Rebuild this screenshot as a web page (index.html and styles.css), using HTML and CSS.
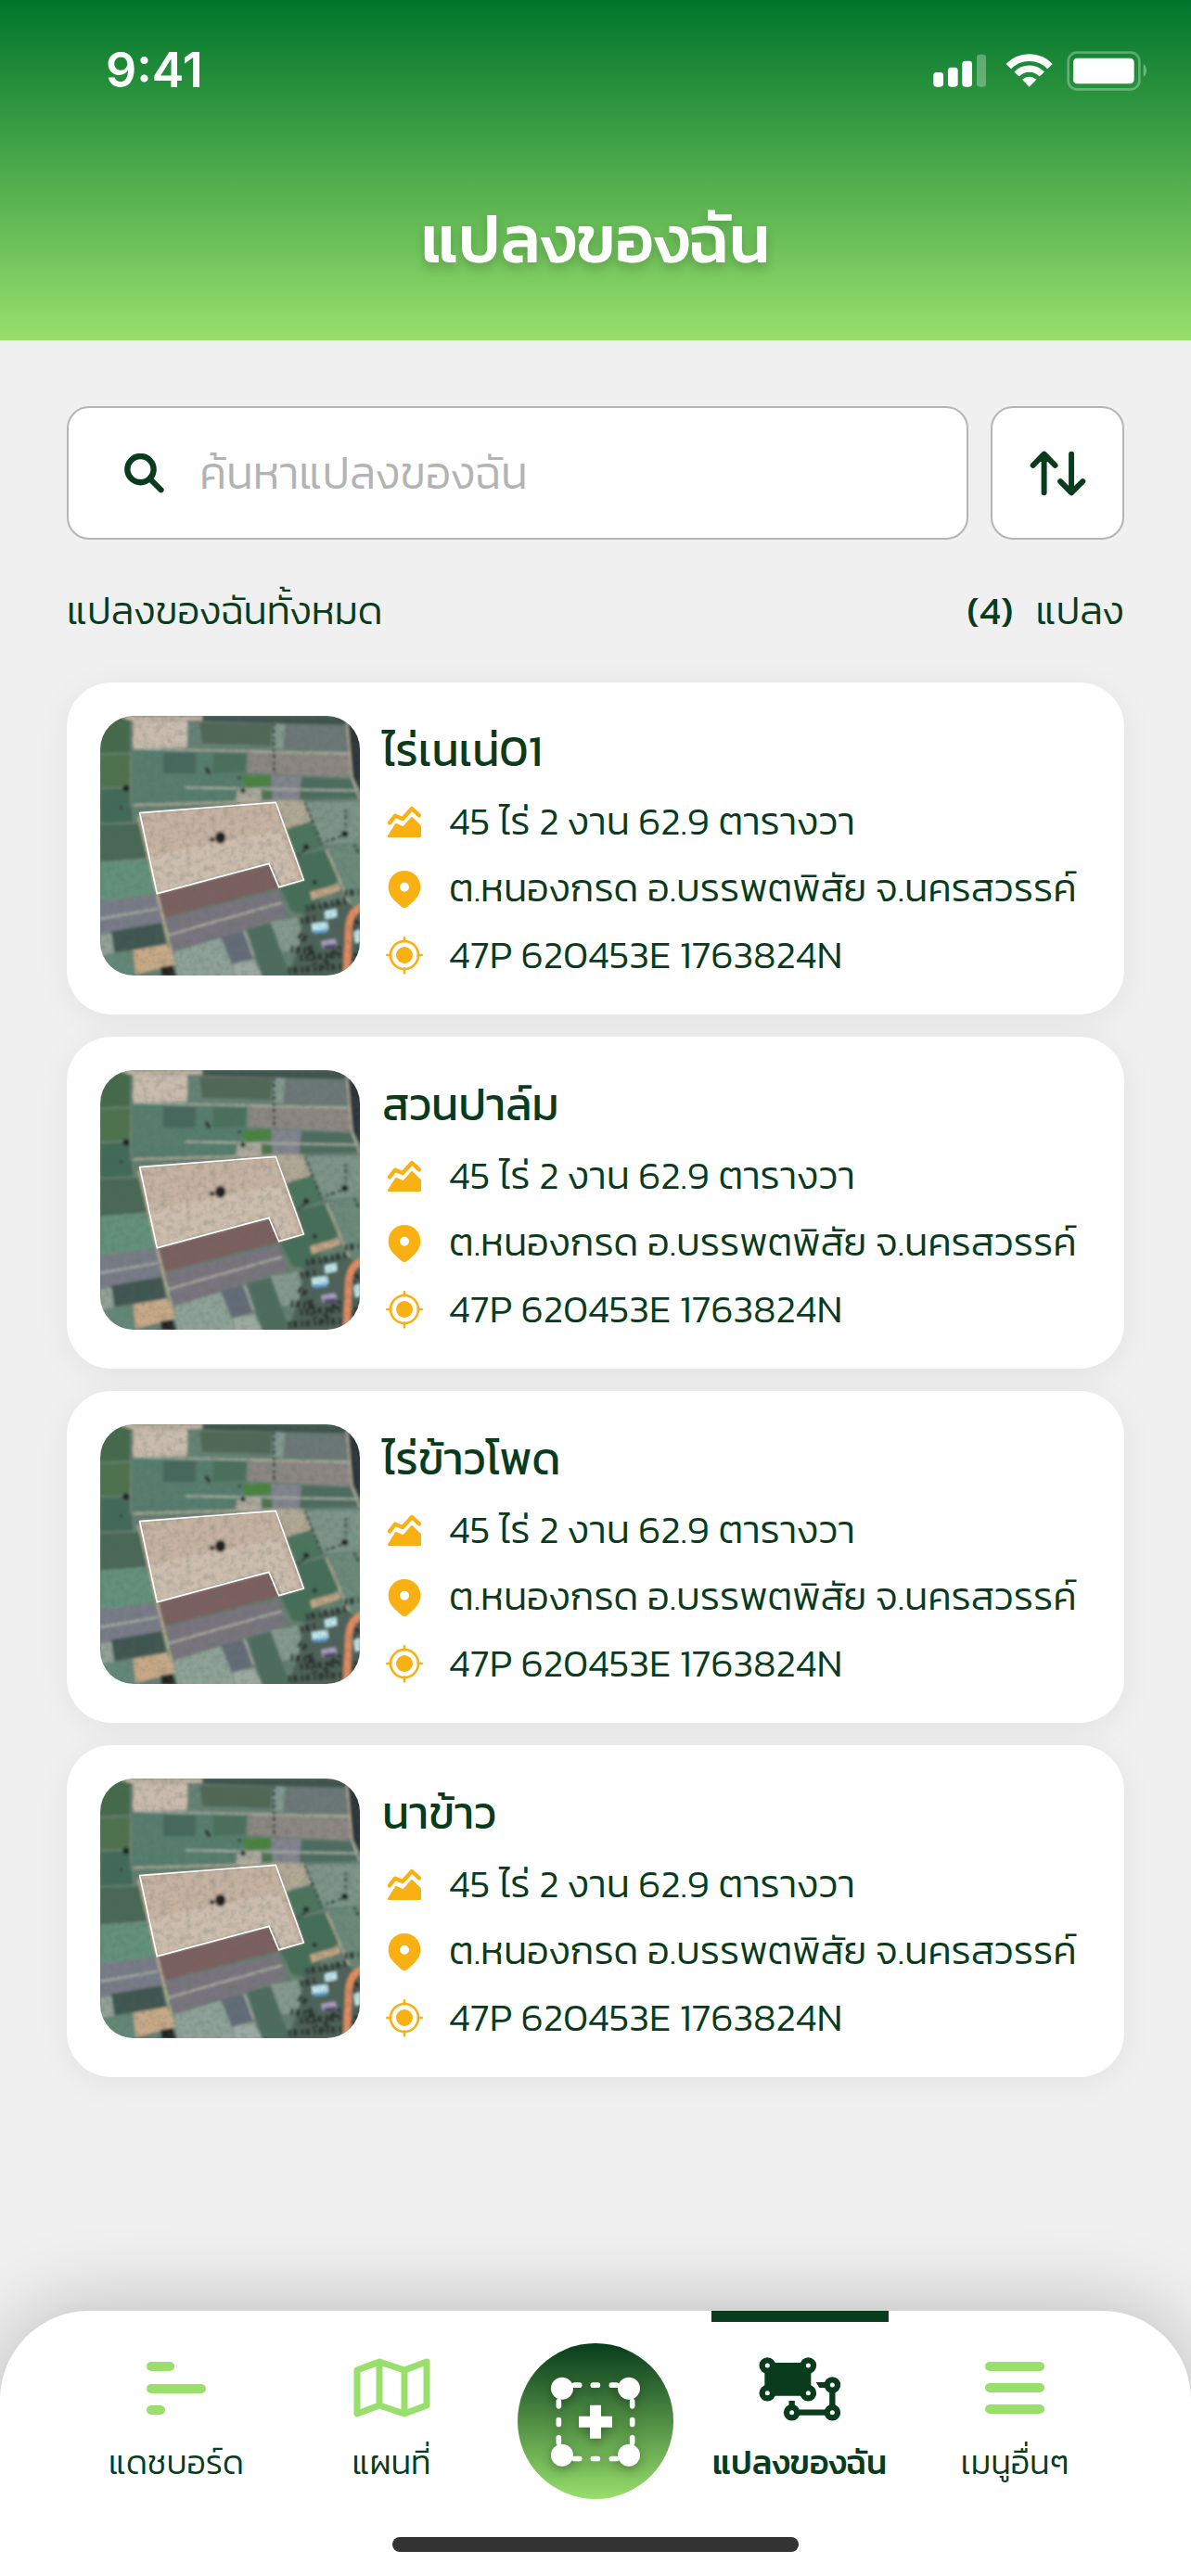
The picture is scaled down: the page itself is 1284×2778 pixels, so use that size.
FILE: index.html
```
<!DOCTYPE html>
<html lang="th">
<head>
    <meta charset="UTF-8">
    <meta name="viewport" content="width=device-width, initial-scale=1.0">
    <title>แปลงของฉัน</title>
    <link rel="stylesheet" href="styles.css">
</head>
<body>
    <!-- shared icons -->
    <svg class="sprite" aria-hidden="true">
        <defs>
            <filter id="soften" x="0" y="0" width="100%" height="100%">
                <feGaussianBlur stdDeviation="4"/>
            </filter>
            <filter id="grain" x="0" y="0" width="100%" height="100%">
                <feTurbulence type="fractalNoise" baseFrequency="0.05" numOctaves="3" seed="4"/>
                <feColorMatrix type="matrix" values="0 0 0 0 0.1  0 0 0 0 0.14  0 0 0 0 0.12  1.6 0 0 0 -0.66"/>
            </filter>
        </defs>
        <symbol id="icon-area" viewBox="36 60 144 144">
            <path d="M60 136L78 113L102 123L132 90L156 112" fill="none" stroke="currentColor" stroke-width="13" stroke-linecap="round" stroke-linejoin="round"/>
            <path d="M58 179L81 142L105 152L132 121L158 147V179Z" fill="currentColor" stroke="currentColor" stroke-width="8" stroke-linejoin="round"/>
        </symbol>
        <symbol id="icon-pin" viewBox="36 276 144 144">
            <path fill="currentColor" fill-rule="evenodd" d="M56 343a52 52 0 0 1 104 0c0 20-9 33-20 44l-22 20q-10 8-20 0l-22-20c-11-11-20-24-20-44zM93 344a15 15 0 1 0 30 0a15 15 0 1 0-30 0z"/>
        </symbol>
        <symbol id="icon-target" viewBox="36 492 144 144">
            <circle cx="108" cy="564" r="27" fill="currentColor"/>
            <path d="M108 508v12M108 608v14M52 564h12M152 564h12" stroke="currentColor" stroke-width="8" stroke-linecap="round"/>
            <circle cx="108" cy="564" r="45" fill="none" stroke="currentColor" stroke-width="8"/>
        </symbol>
        <symbol id="field-photo" viewBox="24 36 840 840">
            <g filter="url(#soften)">
                <path fill="#647f71" d="M0 0h900v900H0z"/>
                <path fill="#456b4c" d="M24 36h104l-3 119-101 5z"/>
                <path fill="#50724e" d="M24 163l101-5-7 107-94 5z"/>
                <path fill="#436a59" d="M24 273l96-6 10 113-106 6z"/>
                <path fill="#c0b1a2" d="M80 36h275v14l-225 5z"/>
                <path fill="#c9bbae" d="M130 55l178-3-3 86-175 2z"/>
                <path fill="#3f524d" d="M355 36h475v30l-475-10z"/>
                <path fill="#668174" d="M308 52l275 8v76l-275 3z"/>
                <path fill="#516757" d="M345 58l235 4-5 70-220-6z"/>
                <path fill="#82998f" d="M583 60l40 4-5 82-35-6z"/>
                <path fill="#6c7877" d="M622 66l208 4 2 82-217-8z"/>
                <path fill="#577d6e" d="M128 142l374 8-5 80-20 87-349 14z"/>
                <path fill="#47685d" d="M228 155h104v67H228z"/>
                <path fill="#4c705d" d="M390 155l108 2-6 60-104 6z"/>
                <path fill="#8d8782" d="M502 148l330 12v76l-332-18z"/>
                <path fill="#4a843c" d="M480 232l98-5-3 35-80 6z"/>
                <path fill="#83858e" d="M578 228l97 5-7 75h-88z"/>
                <path fill="#4d6d61" d="M675 235l160 5 27 62-194 6z"/>
                <path fill="#afa99d" d="M468 278l77-4v38h-82z"/>
                <path fill="#4f7351" d="M547 272h33v36h-33z"/>
                <path fill="#2f3638" d="M822 36h50v250l-34-56z"/>
                <path fill="#4a6857" d="M24 388l130-4 24 112-154 14z"/>
                <path fill="#64917c" d="M24 510l148-12 36 114-184 20z"/>
                <path fill="#797c88" d="M24 635l186-20 16 97-202 34z"/>
                <path fill="#92a298" d="M24 745l38-5 8 64-46 8z"/>
                <path fill="#3f5751" d="M60 733l163-28 14 69-167 28z"/>
                <path fill="#638878" d="M24 812l108-10 8 80H24z"/>
                <path fill="#c8a987" d="M130 795l110-20 25 64-125 35z"/>
                <path fill="#b0a895" d="M592 308l90 2 25 66-82 26z"/>
                <path fill="#7b9588" d="M685 315l190-4v130l-130 14z"/>
                <path fill="#4c755d" d="M628 402l77-22 40 78-86 32z"/>
                <path fill="#456e58" d="M660 490l95-22 40 96-100 116-50-10-40-80 72-24z"/>
                <path fill="#6a8a7a" d="M755 466l115-26v205l-40 10z"/>
                <path fill="#c1a484" d="M702 606l93-26 6 20-92 32z"/>
                <path fill="#7c6061" d="M208 611l362-95 34 78-369 94z"/>
                <path fill="#79757e" d="M235 690l367-85 26 80-366 115z"/>
                <path fill="#8fa297" d="M262 800l153-46 50 130H275z"/>
                <path fill="#646c78" d="M413 750l77-16 35 86-73 18z"/>
                <path fill="#9ca9a1" d="M450 840l72-18 28 60h-88z"/>
                <path fill="#4e6d5e" d="M500 727l75-20 65 175h-90z"/>
                <path fill="#84988e" d="M575 702l88-14 20 100-72 12z"/>
                <path fill="#4e6258" d="M690 655l132-22 50 50v200H630l35-100z"/>
                <path fill="#c6b2a1" d="M152 350l440-34 90 251-80 23-32-76-362 97z"/>
                <path fill="#cdbdae" d="M186 490l420-85 60 160-62 20-34-76-362 99z"/>
                <g fill="none" stroke="#c8b795" stroke-width="6">
                    <path d="M148 362L208 612L265 842"/>
                    <path stroke="#b5b9aa" stroke-width="5" d="M24 692L212 660M245 745L612 640M130 142L832 158M300 268L850 278M490 732L520 815"/>
                    <path stroke="#b8ae9a" d="M822 55L838 235L864 305M755 468L830 640M130 325L590 312"/>
                    <path stroke="#7b8f80" stroke-width="3" d="M24 160L122 156M24 270L120 267M24 386L150 382M24 510L172 500M24 634L208 612M122 60V330"/>
                </g>
                <g fill="none" stroke="#2b3431" stroke-width="8" stroke-dasharray="9 7 14 11">
                    <path d="M586 62V218M686 318L742 452M818 340V400M755 442L828 418M846 452L862 486M662 488L700 460M574 520L604 588"/>
                    <path stroke-width="22" d="M690 660L826 632M672 700L720 690M665 745L700 765M640 790L720 800M632 860L820 846M670 820L810 808M700 780L720 840M740 850L800 780M815 610L860 606M838 720L864 690M842 830L864 790"/>
                </g>
                <g fill="#222423">
                    <ellipse cx="413" cy="430" rx="17" ry="20"/>
                    <circle cx="386" cy="436" r="8"/>
                    <circle cx="108" cy="270" r="11"/>
                    <ellipse cx="372" cy="214" rx="6" ry="13" transform="rotate(-30 372 214)"/>
                    <circle cx="486" cy="278" r="8"/>
                    <circle cx="474" cy="236" r="5"/>
                    <circle cx="815" cy="418" r="11"/>
                    <circle cx="690" cy="460" r="9"/>
                    <circle cx="718" cy="574" r="7"/>
                    <circle cx="92" cy="332" r="5"/>
                    <path d="M220 848l38-4 12 34h-48z"/>
                </g>
                <path fill="#c4eaf0" d="M750 668l38-8 2 26-38 8zM708 708l50-6 4 24-52 8zM845 735l20-8v40l-16 4z"/>
                <path fill="#5fa4dc" d="M712 730l48-4-2 10-44 4z"/>
                <path fill="#a79dbb" d="M738 765l46-8 8 22-48 10z"/>
                <path fill="#4d3f72" d="M748 778l40-4-6 12-34 2z"/>
                <path fill="none" stroke="#e28c61" stroke-width="22" d="M872 656Q832 664 828 722L820 890"/>
            </g>
            <rect x="24" y="36" width="840" height="840" filter="url(#grain)" opacity="0.35"/>
            <path d="M152 350L592 316L682 567L602 590L570 514L208 611Z" fill="none" stroke="#fff" stroke-width="5"/>
        </symbol>
    </svg>

    <header class="header">
        <div class="status-bar">
            <span class="time">9:41</span>
            <svg class="status-icons" viewBox="78 52 693 129" fill="#fff" aria-hidden="true">
                <rect x="79" y="121" width="32" height="47" rx="10"/>
                <rect x="126" y="105" width="32" height="63" rx="10"/>
                <rect x="172" y="84" width="32" height="84" rx="10"/>
                <rect x="219" y="63" width="30" height="105" rx="10" opacity="0.3"/>
                <g fill="none" stroke="#fff">
                    <path d="M322 102A93 93 0 0 1 456 102" stroke-width="23"/>
                    <path d="M348 127A57 57 0 0 1 430 127" stroke-width="22"/>
                </g>
                <path d="M366 144Q389 126 412 144L389 168Z"/>
                <rect x="515" y="57" width="230" height="119" rx="28" fill="none" stroke="#fff" stroke-width="8" opacity="0.3"/>
                <rect x="531" y="75" width="197" height="83" rx="13"/>
                <path d="M758 95q10 4 10 20t-10 20z" opacity="0.35"/>
            </svg>
        </div>
        <h1>แปลงของฉัน</h1>
    </header>

    <main class="content">
        <form class="search-row">
            <div class="search-box">
                <svg class="search-icon" viewBox="102 116 128 128" aria-hidden="true">
                    <circle cx="154" cy="167" r="42" fill="none" stroke="currentColor" stroke-width="19"/>
                    <path d="M185 198L220 233" stroke="currentColor" stroke-width="18" stroke-linecap="round"/>
                </svg>
                <input type="search" placeholder="ค้นหาแปลงของฉัน" aria-label="ค้นหาแปลงของฉัน">
            </div>
            <button type="button" class="sort-button" aria-label="เรียงลำดับ">
                <svg viewBox="210 165 184 148" fill="none" stroke="currentColor" stroke-width="18" stroke-linecap="round" stroke-linejoin="round">
                    <path d="M257 176V302M221 213L257 176L293 213M346 176V302M310 265L346 302L383 265"/>
                </svg>
            </button>
        </form>

        <div class="summary">
            <span>แปลงของฉันทั้งหมด</span>
            <span class="count"><b>(4)</b>แปลง</span>
        </div>

        <ul class="plots">
            <li class="plot">
                <svg class="photo" role="img" aria-label="ภาพถ่ายดาวเทียม"><use href="#field-photo"/></svg>
                <div class="info">
                    <h2>ไร่เนเน่01</h2>
                    <p><svg><use href="#icon-area"/></svg>45 ไร่ 2 งาน 62.9 ตารางวา</p>
                    <p><svg><use href="#icon-pin"/></svg>ต.หนองกรด อ.บรรพตพิสัย จ.นครสวรรค์</p>
                    <p><svg><use href="#icon-target"/></svg>47P 620453E 1763824N</p>
                </div>
            </li>
            <li class="plot">
                <svg class="photo" role="img" aria-label="ภาพถ่ายดาวเทียม"><use href="#field-photo"/></svg>
                <div class="info">
                    <h2>สวนปาล์ม</h2>
                    <p><svg><use href="#icon-area"/></svg>45 ไร่ 2 งาน 62.9 ตารางวา</p>
                    <p><svg><use href="#icon-pin"/></svg>ต.หนองกรด อ.บรรพตพิสัย จ.นครสวรรค์</p>
                    <p><svg><use href="#icon-target"/></svg>47P 620453E 1763824N</p>
                </div>
            </li>
            <li class="plot">
                <svg class="photo" role="img" aria-label="ภาพถ่ายดาวเทียม"><use href="#field-photo"/></svg>
                <div class="info">
                    <h2>ไร่ข้าวโพด</h2>
                    <p><svg><use href="#icon-area"/></svg>45 ไร่ 2 งาน 62.9 ตารางวา</p>
                    <p><svg><use href="#icon-pin"/></svg>ต.หนองกรด อ.บรรพตพิสัย จ.นครสวรรค์</p>
                    <p><svg><use href="#icon-target"/></svg>47P 620453E 1763824N</p>
                </div>
            </li>
            <li class="plot">
                <svg class="photo" role="img" aria-label="ภาพถ่ายดาวเทียม"><use href="#field-photo"/></svg>
                <div class="info">
                    <h2>นาข้าว</h2>
                    <p><svg><use href="#icon-area"/></svg>45 ไร่ 2 งาน 62.9 ตารางวา</p>
                    <p><svg><use href="#icon-pin"/></svg>ต.หนองกรด อ.บรรพตพิสัย จ.นครสวรรค์</p>
                    <p><svg><use href="#icon-target"/></svg>47P 620453E 1763824N</p>
                </div>
            </li>
        </ul>
    </main>

    <nav class="tab-bar">
        <div class="tabs">
            <a href="#" class="tab">
                <svg width="66" height="72" viewBox="0 0 66 72" fill="currentColor">
                    <rect x="1" y="7" width="30" height="10" rx="5"/>
                    <rect x="1" y="31" width="64" height="10" rx="5"/>
                    <rect x="1" y="54" width="20" height="10" rx="5"/>
                </svg>
                <span>แดชบอร์ด</span>
            </a>
            <a href="#" class="tab">
                <svg width="83" height="72" viewBox="0 0 83 72" fill="none" stroke="currentColor" stroke-width="7" stroke-linejoin="round">
                    <path d="M4 16L28 7L55 16L79 7V54L55 63L28 54L4 63ZM28 7V54M55 16V63"/>
                </svg>
                <span>แผนที่</span>
            </a>
            <button type="button" class="add-button" aria-label="เพิ่มแปลง">
                <svg viewBox="162 157 288 290" fill="#fff">
                    <g fill="none" stroke="#fff" stroke-width="17" stroke-linecap="round">
                        <path d="M238 184H254M298 184H313M358 184H374M238 422H254M298 422H313M358 422H374"/>
                        <path d="M187 236V252M187 296V311M187 354V370M425 236V252M425 296V311M425 354V370"/>
                    </g>
                    <circle cx="198" cy="195" r="36"/>
                    <circle cx="414" cy="195" r="36"/>
                    <circle cx="198" cy="411" r="36"/>
                    <circle cx="414" cy="411" r="36"/>
                    <path d="M288 249h36v36h36v36h-36v36h-36v-36h-36v-36h36z"/>
                </svg>
            </button>
            <a href="#" class="tab active" aria-current="page">
                <svg width="89" height="72" viewBox="51 57 267 216" fill="currentColor">
                    <path d="M70 81h150v107H70z"/>
                    <path d="M158 204V242H289V153" fill="none" stroke="currentColor" stroke-width="19"/>
                    <path d="M236 144h40v18h-29z"/>
                    <g stroke="currentColor" stroke-width="19" fill="#fff">
                        <circle cx="79" cy="90" r="17"/>
                        <circle cx="211" cy="90" r="17"/>
                        <circle cx="79" cy="179" r="17"/>
                        <circle cx="211" cy="179" r="17"/>
                        <circle cx="289" cy="153" r="17"/>
                        <circle cx="289" cy="242" r="17"/>
                        <circle cx="158" cy="242" r="17"/>
                    </g>
                </svg>
                <span>แปลงของฉัน</span>
            </a>
            <a href="#" class="tab">
                <svg width="66" height="72" viewBox="0 0 66 72" fill="currentColor">
                    <rect x="1" y="7" width="64" height="10" rx="5"/>
                    <rect x="1" y="30" width="64" height="10" rx="5"/>
                    <rect x="1" y="53" width="64" height="10" rx="5"/>
                </svg>
                <span>เมนูอื่นๆ</span>
            </a>
        </div>
        <div class="home-indicator"></div>
    </nav>
</body>
</html>
```
FILE: styles.css
```
* {
    box-sizing: border-box;
}
body {
    display: flex;
    flex-direction: column;
    min-height: 100vh;
    margin: 0;
    background-color: #f0f0f0;
    color: #083c1c;
    font-family: Kanit, "Noto Sans", sans-serif;
    font-size: 42px;
    font-weight: 300;
    overflow-x: hidden;
}
h1, h2, p, ul {
    margin: 0;
    padding: 0;
}
.sprite {
    position: absolute;
    width: 0;
    height: 0;
}

/* header */
.header {
    padding-bottom: 55px;
    background: linear-gradient(#00752b, #98df6c);
    color: #fff;
}
.status-bar {
    display: flex;
    justify-content: space-between;
    align-items: center;
    padding: 46px 47px 0 114px;
}
.time {
    font-family: Inter, sans-serif;
    font-size: 52px;
    font-weight: 600;
    line-height: 60px;
}
.status-icons {
    width: 231px;
    height: 43px;
}
h1 {
    margin-top: 98px;
    font-size: 72px;
    font-weight: 500;
    line-height: 108px;
    text-align: center;
    text-shadow: 0 6px 12px rgba(0, 0, 0, 0.2);
}

/* search */
.content {
    padding: 71px 72px 72px;
}
.search-row {
    display: flex;
    gap: 24px;
}
.search-box {
    flex: 1;
    display: flex;
    align-items: center;
    gap: 38px;
    height: 144px;
    padding: 0 60px;
    background-color: #fff;
    border: 2px solid #b5b5b5;
    border-radius: 24px;
}
.search-icon {
    width: 43px;
    height: 43px;
}
.search-box input {
    flex: 1;
    min-width: 0;
    padding: 0;
    border: none;
    outline: none;
    background: none;
    color: inherit;
    font: inherit;
    font-size: 48px;
}
.search-box input::placeholder {
    color: #b3b3b3;
}
.sort-button {
    display: flex;
    justify-content: center;
    align-items: center;
    width: 144px;
    height: 144px;
    padding: 0;
    background-color: #fff;
    border: 2px solid #b5b5b5;
    border-radius: 24px;
    color: inherit;
}
.sort-button svg {
    width: 61px;
    height: 49px;
}
.summary {
    display: flex;
    justify-content: space-between;
    margin: 45px 0;
    line-height: 64px;
}
.count b {
    margin-right: 24px;
    font-weight: 400;
}

/* plot list */
.plots {
    display: flex;
    flex-direction: column;
    gap: 24px;
    list-style: none;
}
.plot {
    display: flex;
    gap: 24px;
    padding: 36px 36px 28px;
    background-color: #fff;
    border-radius: 48px;
    box-shadow: 0 6px 36px rgba(0, 0, 0, 0.06);
}
.photo {
    flex: none;
    width: 280px;
    height: 280px;
    border-radius: 36px;
}
.info h2 {
    margin-bottom: 4px;
    font-size: 48px;
    font-weight: 400;
    line-height: 74px;
}
.info p {
    display: flex;
    align-items: center;
    gap: 24px;
    line-height: 72px;
    white-space: nowrap;
}
.info p svg {
    width: 48px;
    height: 48px;
    color: #f8b013;
}

/* bottom navigation */
.tab-bar {
    margin-top: auto;
    padding: 0 74px 26px;
    background-color: #fff;
    border-radius: 96px 96px 0 0;
    box-shadow: 0 0 90px rgba(0, 0, 0, 0.24);
}
.tabs {
    display: grid;
    grid-template-columns: 1fr 1fr 208px 1fr 1fr;
    justify-items: center;
}
.tab {
    position: relative;
    display: flex;
    flex-direction: column;
    align-items: center;
    gap: 16px;
    padding-top: 48px;
    color: #98df6c;
    font-size: 36px;
    line-height: 54px;
    text-decoration: none;
}
.tab span {
    color: #083c1c;
}
.tab.active {
    min-width: 191px;
    color: #083c1c;
    font-weight: 500;
}
.tab.active::before {
    content: "";
    position: absolute;
    top: 0;
    left: 0;
    right: 0;
    height: 12px;
    background-color: #083c1c;
}
.add-button {
    display: flex;
    justify-content: center;
    align-items: center;
    width: 168px;
    height: 168px;
    margin-top: 35px;
    padding: 0;
    border: none;
    border-radius: 50%;
    background: linear-gradient(#083c1c, #98df6c);
}
.add-button svg {
    width: 96px;
    height: 97px;
    overflow: visible;
    filter: drop-shadow(0 4px 6px rgba(0, 0, 0, 0.3));
}
.home-indicator {
    width: 438px;
    height: 16px;
    margin: 41px auto 0;
    background-color: #333;
    border-radius: 8px;
}
```
